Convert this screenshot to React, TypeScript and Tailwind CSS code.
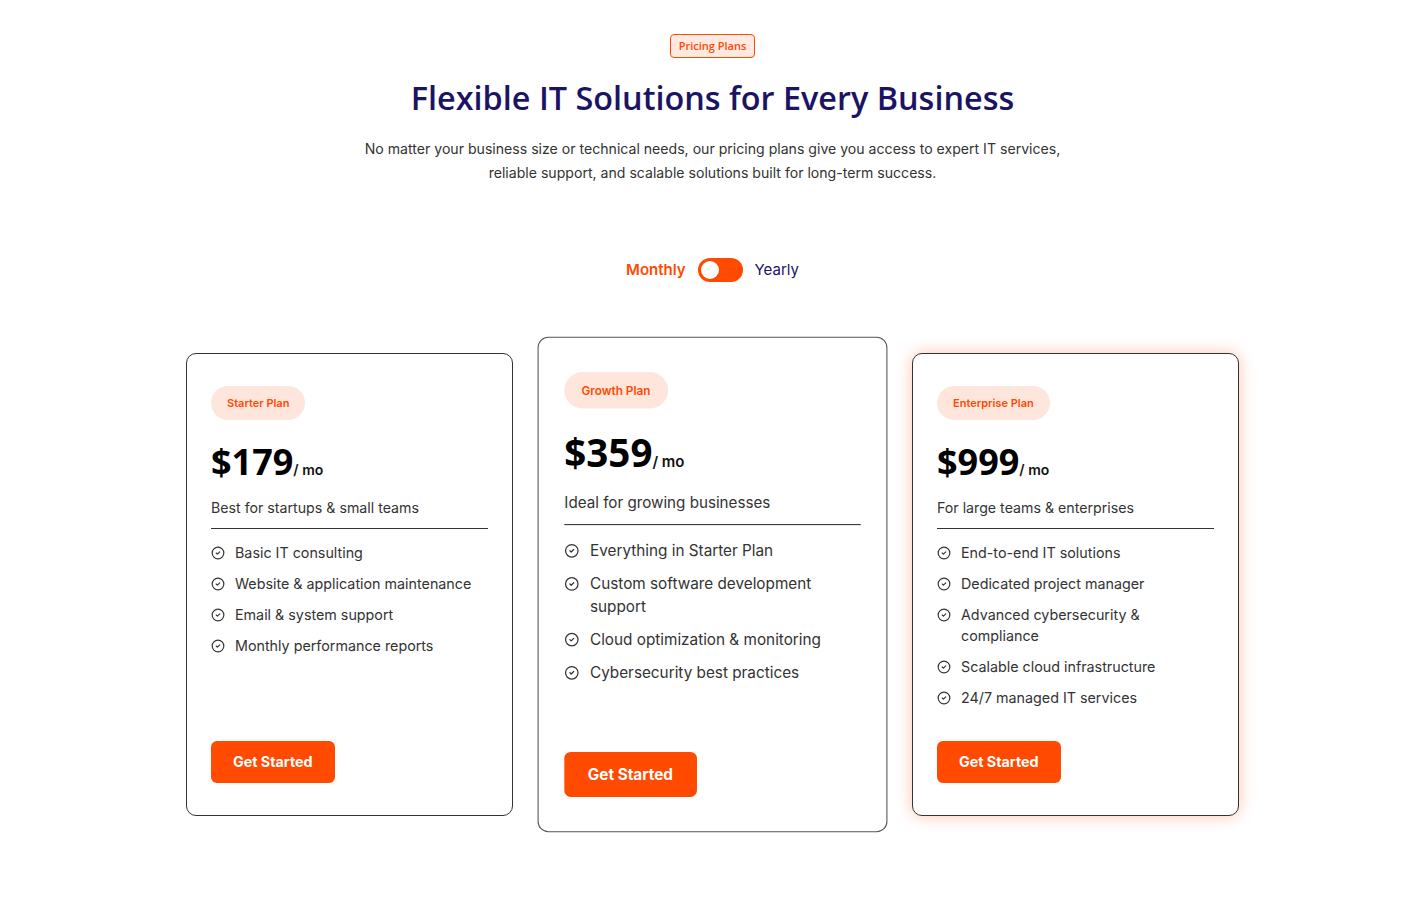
import { CircleCheck } from "lucide-react";

const PLANS = [
  {
    name: "Starter Plan",
    price: "$179",
    blurb: "Best for startups & small teams",
    features: [
      "Basic IT consulting",
      "Website & application maintenance",
      "Email & system support",
      "Monthly performance reports",
    ],
    variant: "plain",
  },
  {
    name: "Growth Plan",
    price: "$359",
    blurb: "Ideal for growing businesses",
    features: [
      "Everything in Starter Plan",
      "Custom software development support",
      "Cloud optimization & monitoring",
      "Cybersecurity best practices",
    ],
    variant: "scaled",
  },
  {
    name: "Enterprise Plan",
    price: "$999",
    blurb: "For large teams & enterprises",
    features: [
      "End-to-end IT solutions",
      "Dedicated project manager",
      "Advanced cybersecurity & compliance",
      "Scalable cloud infrastructure",
      "24/7 managed IT services",
    ],
    variant: "glow",
  },
] as const;

const inter = "font-['Inter','Noto_Sans',sans-serif]";
const openSans = "font-['Open_Sans','Noto_Sans',sans-serif]";

function PlanCard({ plan }: { plan: (typeof PLANS)[number] }) {
  return (
    <div
      className={
        "flex flex-col rounded-[10px] border border-[#333333] bg-white px-6 pb-8 pt-8 " +
        (plan.variant === "scaled" ? "scale-[1.07] border-[#555555]" : "") +
        (plan.variant === "glow" ? "shadow-[0_0_16px_rgba(255,74,0,0.32)]" : "")
      }
    >
      <span
        className={`${inter} inline-flex h-[34px] self-start items-center rounded-full bg-[#ffe6dd] px-4 text-[11px] font-semibold text-[#ff4a00]`}
      >
        {plan.name}
      </span>
      <div className="mt-[24px] flex items-baseline">
        <span className={`${openSans} text-[36px] font-bold leading-none text-black`}>
          {plan.price}
        </span>
        <span className={`${inter} text-[14px] font-semibold text-[#111]`}>/ mo</span>
      </div>
      <p
        className={`${inter} mt-[17px] border-b border-[#333333] pb-[10px] text-[14.2px] leading-[21px] text-[#333333]`}
      >
        {plan.blurb}
      </p>
      <ul className="mb-[33px] mt-[13px] flex flex-col gap-[10px]">
        {plan.features.map((f) => (
          <li key={f} className="flex items-start gap-[10px]">
            <CircleCheck className="mt-1 h-[14px] w-[14px] shrink-0 text-[#333333]" strokeWidth={2} />
            <span className={`${inter} text-[14.3px] leading-[21px] text-[#333333]`}>{f}</span>
          </li>
        ))}
      </ul>
      <button
        type="button"
        className={`${inter} mt-auto h-[42px] self-start rounded-md bg-[#ff4a00] px-[22px] text-[14.3px] font-bold text-white`}
      >
        Get Started
      </button>
    </div>
  );
}

export default function App() {
  return (
    <div className="min-h-screen bg-white pb-16 pl-[5px] pt-[34px]">
      <div className="flex flex-col items-center text-center">
        <span
          className={`${openSans} inline-flex h-[24px] items-center rounded-[4px] border border-[#ff4a00] bg-[#ffe9e0] px-2 text-[11px] font-semibold text-[#ff4a00]`}
        >
          Pricing Plans
        </span>
        <h1 className={`${openSans} mt-[17px] text-[32.4px] font-semibold leading-[44px] text-[#1b1464]`}>
          Flexible IT Solutions for Every Business
        </h1>
        <p className={`${inter} mt-[18px] max-w-[710px] text-[14.1px] leading-[24px] text-[#333333]`}>
          No matter your business size or technical needs, our pricing plans give you access to expert IT services,
          reliable support, and scalable solutions built for long-term success.
        </p>
        <div className="mt-[73px] flex items-center gap-3">
          <span className={`${inter} text-[15px] font-semibold text-[#ff4a00]`}>Monthly</span>
          <span className="relative inline-flex h-[24px] w-[45px] items-center rounded-full bg-[#ff4a00]">
            <span className="absolute left-[3px] h-[18px] w-[18px] rounded-full bg-white" />
          </span>
          <span className={`${inter} text-[15px] text-[#1b1464]`}>Yearly</span>
        </div>
      </div>
      <div className="mx-auto mt-[71px] grid w-[1053px] grid-cols-3 gap-9">
        {PLANS.map((p) => (
          <PlanCard key={p.name} plan={p} />
        ))}
      </div>
    </div>
  );
}
